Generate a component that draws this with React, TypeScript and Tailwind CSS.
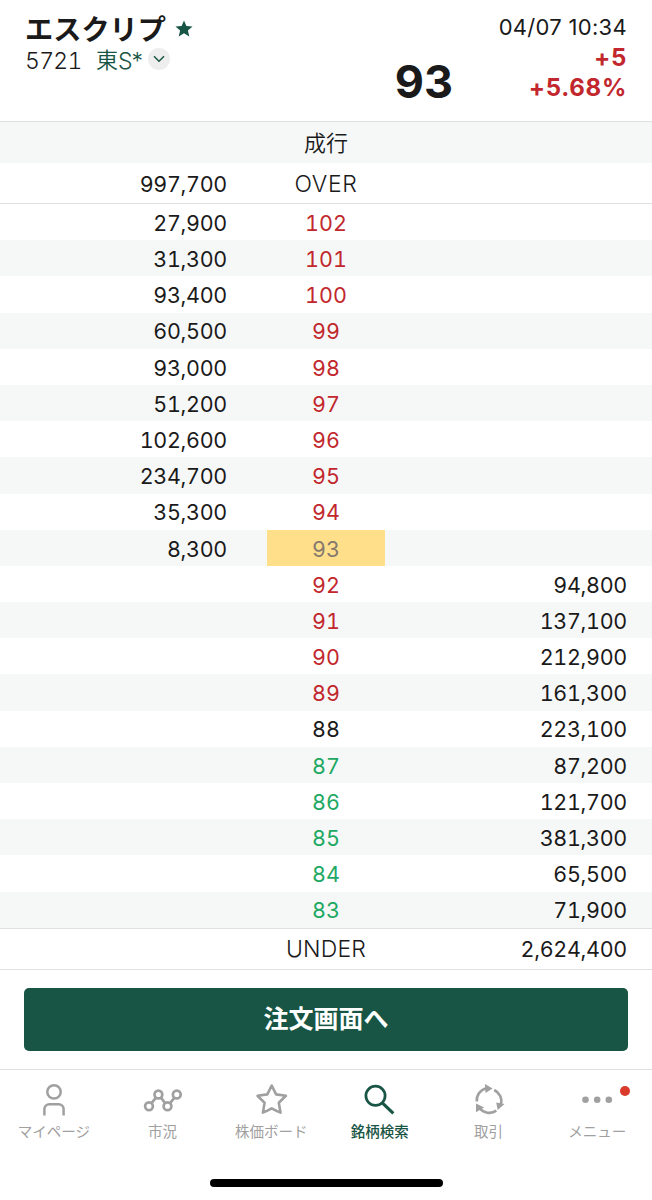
import React from 'react';

type Level = { ask?: string; price: string; bid?: string };

const levels: Level[] = [
  { ask: '27,900', price: '102' },
  { ask: '31,300', price: '101' },
  { ask: '93,400', price: '100' },
  { ask: '60,500', price: '99' },
  { ask: '93,000', price: '98' },
  { ask: '51,200', price: '97' },
  { ask: '102,600', price: '96' },
  { ask: '234,700', price: '95' },
  { ask: '35,300', price: '94' },
  { ask: '8,300', price: '93' },
  { price: '92', bid: '94,800' },
  { price: '91', bid: '137,100' },
  { price: '90', bid: '212,900' },
  { price: '89', bid: '161,300' },
  { price: '88', bid: '223,100' },
  { price: '87', bid: '87,200' },
  { price: '86', bid: '121,700' },
  { price: '85', bid: '381,300' },
  { price: '84', bid: '65,500' },
  { price: '83', bid: '71,900' },
];

const LAST = 93;
const PREV_CLOSE = 88;

function priceColor(price: number) {
  if (price === LAST) return 'bg-[#ffdf8a] text-[#85796f]';
  if (price > PREV_CLOSE) return 'text-[#c1272d]';
  if (price < PREV_CLOSE) return 'text-[#1da863]';
  return 'text-[#1a1a1a]';
}

const grid = 'grid grid-cols-[227px_40px_118px_1fr] items-stretch pr-[25px]';
const num = "flex items-center justify-end font-['Inter',sans-serif] text-[21.5px] leading-none tracking-[-0.3px] tabular-nums";
const jp = "font-['Noto_Sans_CJK_JP',sans-serif]";
const side = "flex items-center justify-center font-['Inter',sans-serif] text-[23px] font-light leading-none";

function Header() {
  return (
    <header className="flex h-[122px] justify-between border-b border-[#dfe1e1] pl-[25px] pr-[25px]">
      <div className="pt-[12px]">
        <div className="flex h-[31px] items-center">
          <h1 className={`${jp} text-[28.2px] font-bold leading-[30px] text-[#1a1a1a]`}>エスクリプ</h1>
          <svg className="ml-[9px] mt-[2px]" width="18" height="17" viewBox="0 0 18 17" fill="#185544">
            <path d="M9 .4l2.400 5.600 6.100.5-4.600 4 1.400 6L9 13.300l-5.300 3.200 1.400-6L.5 6.500l6.100-.5z" />
          </svg>
        </div>
        <div className="flex h-[32px] items-center font-['Inter',sans-serif] text-[23px] font-light leading-[32px]">
          <span className="w-[71px] pt-[3px] leading-[28px] tracking-[-0.7px] text-[#1a1a1a] tabular-nums">5721</span>
          <span className="flex w-[52px] items-center whitespace-nowrap text-[#185544]">
            <span className={`${jp} pb-[2px] text-[22px] font-[350] leading-[28px]`}>東</span>
            <span className="pt-[3px] leading-[28px] tracking-[-1px]">S*</span>
          </span>
          <span className="flex size-[22px] items-center justify-center rounded-full bg-[#eeeeee]">
            <svg width="12" height="8" viewBox="0 0 12 8" fill="none" stroke="#185544" strokeWidth="1.500">
              <path d="M1 1.200l5 5 5-5" />
            </svg>
          </span>
        </div>
      </div>
      <div className="flex font-['Inter',sans-serif]">
        <div className="mr-[46px] pt-[59px] text-[45px] font-bold leading-[45px] text-[#1a1a1a]">93</div>
        <div className="flex w-[128px] flex-col items-end pt-[13px]">
          <div className="whitespace-nowrap pb-[2px] text-[22px] leading-[28px] tracking-[0.3px] text-[#1a1a1a]">04/07 10:34</div>
          <div className="text-[24px] font-bold leading-[30px] tracking-[0.7px] text-[#c1272d]">+5</div>
          <div className="text-[24px] font-bold leading-[30px] tracking-[0.7px] text-[#c1272d]">+5.68%</div>
        </div>
      </div>
    </header>
  );
}

const icons = {
  person: (
    <svg width="40" height="40" viewBox="0 0 40 40" fill="none" stroke="currentColor" strokeWidth="2.500">
      <circle cx="20" cy="11.900" r="6.700" />
      <path d="M10.400 35.500v-6.300a5 5 0 0 1 5-5h9.200a5 5 0 0 1 5 5v6.300" />
    </svg>
  ),
  market: (
    <svg width="40" height="40" viewBox="0 0 40 40" fill="none" stroke="currentColor" strokeWidth="2.700">
      <circle cx="6" cy="26.300" r="3.900" />
      <circle cx="15.400" cy="14.500" r="3.900" />
      <circle cx="24.500" cy="26.300" r="3.900" />
      <circle cx="33.800" cy="14.500" r="3.900" />
      <path d="M8.500 23.200L13 17.600M18 17.600l4.200 5.600M27.100 23.200l4.400-5.600" />
    </svg>
  ),
  star: (
    <svg width="40" height="40" viewBox="0 0 40 40" fill="none" stroke="currentColor" strokeWidth="2.600" strokeLinejoin="round">
      <path d="M19.700 5.500l4.400 8.900 9.800 1.400-7.100 6.900 1.700 9.900q-4.400-1.700-8.800-4.200-4.400 2.500-8.800 4.200l1.700-9.900-7.100-6.900 9.800-1.400z" />
    </svg>
  ),
  search: (
    <svg width="40" height="40" viewBox="0 0 40 40" fill="none" stroke="currentColor">
      <circle cx="15.500" cy="15.800" r="9.600" strokeWidth="2.700" />
      <path d="M22.300 22.800l11 10.500" strokeWidth="3.200" />
    </svg>
  ),
  cycle: (
    <svg width="40" height="40" viewBox="0 0 40 40" fill="none" stroke="currentColor" strokeWidth="2.600">
      <path d="M7.800 21.500A12.400 12.400 0 0 1 17.500 8.200M25.200 10A12.400 12.400 0 0 1 32 24.500M27.300 30.700A12.400 12.400 0 0 1 10.500 28" />
      <path d="M15.900 4l7.700 4.400-7.100 4.500zM27.200 22.500l8.300 1.400-6.800 6zM7 32.300v-8.800l8.100 4z" fill="currentColor" stroke="none" />
    </svg>
  ),
  more: (
    <svg width="40" height="40" viewBox="0 0 40 40" fill="currentColor">
      <circle cx="7.500" cy="19.700" r="3.300" />
      <circle cx="19.200" cy="19.700" r="3.300" />
      <circle cx="30.800" cy="19.700" r="3.300" />
    </svg>
  ),
};

const tabs = [
  { label: 'マイページ', icon: icons.person },
  { label: '市況', icon: icons.market },
  { label: '株価ボード', icon: icons.star },
  { label: '銘柄検索', icon: icons.search, active: true },
  { label: '取引', icon: icons.cycle },
  { label: 'メニュー', icon: icons.more, badge: true },
];

export default function App() {
  return (
    <div className="flex h-[1200px] w-[652px] flex-col overflow-hidden bg-white text-[#1a1a1a]">
      <Header />
      <div className={`flex h-[41px] items-center justify-center bg-[#f6f8f8] pb-[4px] ${jp} text-[22px] font-[350] leading-none`}>
        成行
      </div>
      <div className={`${grid} h-[41px] border-b border-[#dfe1e1]`}>
        <div className={`${num} pt-[3px]`}>997,700</div>
        <div />
        <div className={`${side} pt-[3px] tracking-[0.6px]`}>OVER</div>
      </div>
      <div className="flex flex-col">
        {levels.map((l, i) => (
          <div key={l.price} className={`${grid} h-[36.2px] ${i % 2 ? 'bg-[#f6f8f8]' : 'bg-white'}`}>
            <div className={`${num} pt-[3px]`}>{l.ask}</div>
            <div />
            <div
              className={`flex items-center justify-center pt-[3px] font-['Inter',sans-serif] text-[21.5px] leading-none tabular-nums ${priceColor(Number(l.price))}`}
            >
              {l.price}
            </div>
            <div className={`${num} pt-[3px]`}>{l.bid}</div>
          </div>
        ))}
      </div>
      <div className={`${grid} h-[42px] border-y border-[#dfe1e1]`}>
        <div />
        <div />
        <div className={`${side} pt-[2px] tracking-[0.2px]`}>UNDER</div>
        <div className={`${num} pt-[2px]`}>2,624,400</div>
      </div>
      <div className="h-[99px] px-[24px] pt-[18px]">
        <button className={`flex h-[63px] w-full items-center justify-center rounded-[5px] bg-[#185544] pb-[3px] ${jp} text-[25px] font-bold leading-none text-white`}>
          注文画面へ
        </button>
      </div>
      <nav className="flex h-[110px] border-t border-[#dfe1e1] pt-[10px]">
        {tabs.map((t) => (
          <div
            key={t.label}
            className={`relative flex flex-1 flex-col items-center ${jp} text-[14.5px] leading-[22px] ${t.active ? 'font-medium text-[#185544]' : 'text-[#a0a0a0]'}`}
          >
            {t.icon}
            <span className="mr-[1px] whitespace-nowrap">{t.label}</span>
            {t.badge && <span className="absolute right-[22px] top-[6px] size-[10px] rounded-full bg-[#d93a2b]" />}
          </div>
        ))}
      </nav>
      <div className="flex justify-center">
        <div className="h-[8px] w-[233px] rounded-full bg-black" />
      </div>
    </div>
  );
}
